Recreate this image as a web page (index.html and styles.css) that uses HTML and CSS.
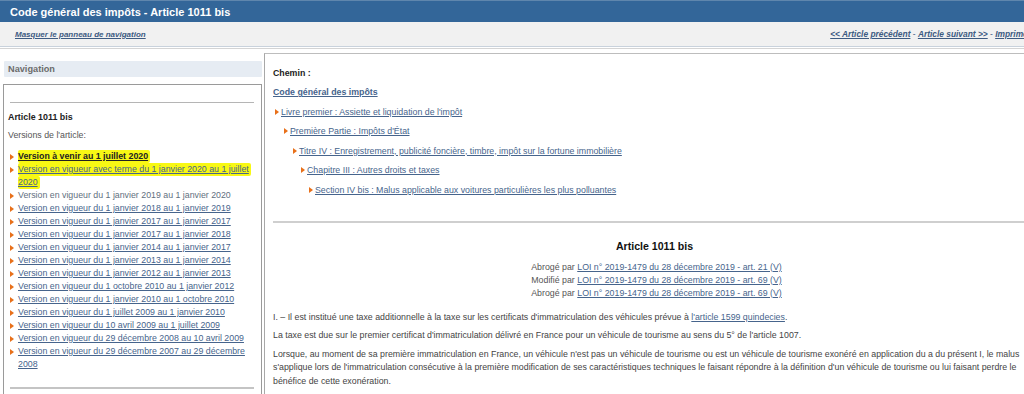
FILE: index.html
```html
<!DOCTYPE html>
<html lang="fr">
<head>
<meta charset="utf-8">
<title>Code général des impôts - Article 1011 bis</title>
<link rel="stylesheet" href="styles.css">
</head>
<body>
<div class="page">
  <header class="topbar">
    <h1 class="topbar-title">Code général des impôts - Article 1011 bis</h1>
  </header>
  <div class="toolbar">
    <a class="toolbar-link" href="#">Masquer le panneau de navigation</a>
    <div class="toolbar-right">
      <a class="toolbar-link" href="#">&lt;&lt; Article précédent</a> - <a class="toolbar-link" href="#">Article suivant &gt;&gt;</a> - <a class="toolbar-link" href="#">Imprimer</a>
    </div>
  </div>
  <div class="main">
    <aside class="nav">
      <div class="nav-title">Navigation</div>
      <div class="nav-box">
        <hr class="rule">
        <div class="nav-article">Article 1011 bis</div>
        <div class="nav-versions">Versions de l'article:</div>
        <ul class="version-list">
          <li class="bullet"><a class="link strong" href="#"><span class="marker">Version à venir au 1 juillet 2020</span></a></li>
          <li class="bullet"><a class="link" href="#"><span class="marker">Version en vigueur avec terme du 1 janvier 2020 au 1 juillet 2020</span></a></li>
          <li class="bullet"><span class="current">Version en vigueur du 1 janvier 2019 au 1 janvier 2020</span></li>
          <li class="bullet"><a class="link" href="#">Version en vigueur du 1 janvier 2018 au 1 janvier 2019</a></li>
          <li class="bullet"><a class="link" href="#">Version en vigueur du 1 janvier 2017 au 1 janvier 2017</a></li>
          <li class="bullet"><a class="link" href="#">Version en vigueur du 1 janvier 2017 au 1 janvier 2018</a></li>
          <li class="bullet"><a class="link" href="#">Version en vigueur du 1 janvier 2014 au 1 janvier 2017</a></li>
          <li class="bullet"><a class="link" href="#">Version en vigueur du 1 janvier 2013 au 1 janvier 2014</a></li>
          <li class="bullet"><a class="link" href="#">Version en vigueur du 1 janvier 2012 au 1 janvier 2013</a></li>
          <li class="bullet"><a class="link" href="#">Version en vigueur du 1 octobre 2010 au 1 janvier 2012</a></li>
          <li class="bullet"><a class="link" href="#">Version en vigueur du 1 janvier 2010 au 1 octobre 2010</a></li>
          <li class="bullet"><a class="link" href="#">Version en vigueur du 1 juillet 2009 au 1 janvier 2010</a></li>
          <li class="bullet"><a class="link" href="#">Version en vigueur du 10 avril 2009 au 1 juillet 2009</a></li>
          <li class="bullet"><a class="link" href="#">Version en vigueur du 29 décembre 2008 au 10 avril 2009</a></li>
          <li class="bullet"><a class="link" href="#">Version en vigueur du 29 décembre 2007 au 29 décembre 2008</a></li>
        </ul>
        <hr class="rule rule-bottom">
      </div>
    </aside>
    <section class="content">
      <div class="chemin-label">Chemin :</div>
      <a class="link strong chemin-root" href="#">Code général des impôts</a>
      <ul class="crumbs">
        <li class="bullet crumb lvl1"><a class="link" href="#">Livre premier : Assiette et liquidation de l'impôt</a></li>
        <li class="bullet crumb lvl2"><a class="link" href="#">Première Partie : Impôts d'État</a></li>
        <li class="bullet crumb lvl3"><a class="link" href="#">Titre IV : Enregistrement, publicité foncière, timbre, impôt sur la fortune  immobilière</a></li>
        <li class="bullet crumb lvl4"><a class="link" href="#">Chapitre III : Autres droits et taxes</a></li>
        <li class="bullet crumb lvl5"><a class="link" href="#">Section IV bis : Malus applicable aux voitures particulières les plus polluantes</a></li>
      </ul>
      <hr class="rule rule-wide">
      <h2 class="article-title">Article 1011 bis</h2>
      <div class="history-wrap">
        <div class="history">
          <div>Abrogé par <a class="link" href="#">LOI n° 2019-1479 du 28 décembre 2019 - art. 21 (V)</a></div>
          <div>Modifié par <a class="link" href="#">LOI n° 2019-1479 du 28 décembre 2019 - art. 69 (V)</a></div>
          <div>Abrogé par <a class="link" href="#">LOI n° 2019-1479 du 28 décembre 2019 - art. 69 (V)</a></div>
        </div>
      </div>
      <div class="article-body">
        <p>I. – Il est institué une taxe additionnelle à la taxe sur les certificats d'immatriculation des véhicules prévue à <a class="link" href="#">l'article 1599 quindecies</a>.</p>
        <p>La taxe est due sur le premier certificat d'immatriculation délivré en France pour un véhicule de tourisme au sens du 5° de l'article 1007.</p>
        <p>Lorsque, au moment de sa première immatriculation en France, un véhicule n'est pas un véhicule de tourisme ou est un véhicule de tourisme exonéré en application du a du présent I, le malus s'applique lors de l'immatriculation consécutive à la première modification de ses caractéristiques techniques le faisant répondre à la définition d'un véhicule de tourisme ou lui faisant perdre le bénéfice de cette exonération.</p>
      </div>
    </section>
  </div>
</div>
</body>
</html>
```
FILE: styles.css
```css
html, body {
  margin: 0;
  padding: 0;
  overflow: hidden;
  background: #ffffff;
}

.page {
  width: 1044px;
  font-family: "Liberation Sans", Arial, sans-serif;
  font-size: 8.8px;
  color: #444;
}

.topbar {
  background: #336699;
  height: 22px;
  display: flex;
  align-items: center;
  padding-left: 10px;
  border-top: 1px solid #5f86ad;
  box-sizing: border-box;
}

.topbar-title {
  margin: 0;
  color: #fff;
  font-size: 11px;
  font-weight: bold;
}

.toolbar {
  height: 24px;
  background: #f1f1f1;
  border-bottom: 1px solid #c9d2dc;
  display: flex;
  align-items: center;
  justify-content: space-between;
  padding: 0 13px 0 15px;
  color: #3d5b82;
  font-size: 8px;
}

.toolbar-right {
  font-size: 8.4px;
}

.toolbar-link {
  color: #3d5b82;
  font-weight: bold;
  font-style: italic;
  text-decoration: underline;
}

.main {
  display: flex;
  align-items: flex-start;
  gap: 2px;
  border-top: 1px solid #d4d4d4;
  margin-top: 1px;
  padding: 4px 0 0 3px;
}

.nav {
  width: 259px;
  flex: none;
  padding-top: 8px;
}

.nav-title {
  height: 16px;
  margin: 0 0 7px 1px;
  background: #e6ecf3;
  color: #6c6c6c;
  font-weight: bold;
  font-size: 9.2px;
  line-height: 16px;
  padding-left: 4px;
  border-radius: 1px;
}

.nav-box {
  border: 1px solid #9a9a9a;
  padding: 17px 7px 10px 4px;
  height: 320px;
  box-sizing: border-box;
  overflow: hidden;
}

.rule {
  border: 0;
  height: 1px;
  background: #b5b5b5;
  margin: 0 0 0 2px;
}

.rule-bottom {
  margin-top: 16px;
  height: 2px;
  background: #c4c4c4;
}

.nav-article {
  margin-top: 9px;
  color: #222;
  font-weight: bold;
  font-size: 8.9px;
  line-height: 10px;
}

.nav-versions {
  margin-top: 8px;
  line-height: 10px;
  color: #555;
}

.version-list {
  list-style: none;
  margin: 10px 0 0 0;
  padding: 0;
  line-height: 13px;
}

.bullet {
  position: relative;
  padding-left: 10px;
}

.bullet::before {
  content: "";
  position: absolute;
  left: 2px;
  top: 3.5px;
  border-style: solid;
  border-width: 3px 0 3px 4px;
  border-color: transparent transparent transparent #e8701a;
}

.link {
  color: #46648c;
  text-decoration: underline;
}

.strong {
  font-weight: bold;
}

.version-list .strong {
  color: #222;
}

.marker {
  background: #f8f814;
  padding: 1px 2px 2px 0;
  border-radius: 2px;
  box-decoration-break: clone;
  -webkit-box-decoration-break: clone;
}

.current {
  color: #5f6f80;
}

.content {
  flex: 1;
  border-left: 1px solid #a8a8a8;
  border-top: 1px solid #bdbdbd;
  padding: 14px 8px 0 8px;
  height: 360px;
  box-sizing: border-box;
}

.chemin-label {
  color: #222;
  font-weight: bold;
  line-height: 10px;
}

.chemin-root {
  display: block;
  margin-top: 9px;
  line-height: 10px;
  width: max-content;
}

.crumbs {
  list-style: none;
  margin: 0;
  padding: 0;
}

.crumb {
  margin-top: 9.5px;
  line-height: 10px;
  padding-left: 8px;
}

.crumb::before {
  left: 2px;
  top: 2px;
}

.lvl2 { margin-left: 9px; }
.lvl3 { margin-left: 18px; }
.lvl4 { margin-left: 26px; }
.lvl5 { margin-left: 34px; }

.rule-wide {
  margin: 26px -20px 0 0;
  height: 2px;
  background: #cfcfcf;
}

.article-title {
  margin: 17px 0 0 0;
  text-align: center;
  color: #111;
  font-size: 10.6px;
  line-height: 12px;
}

.history-wrap {
  display: flex;
  justify-content: center;
  margin-top: 9px;
}

.history {
  text-align: right;
  line-height: 13px;
  color: #555;
  padding-left: 4px;
}

.article-body {
  margin-top: 11px;
}

.article-body p {
  margin: 0 0 5px 0;
  line-height: 13.5px;
  color: #444;
}
```
